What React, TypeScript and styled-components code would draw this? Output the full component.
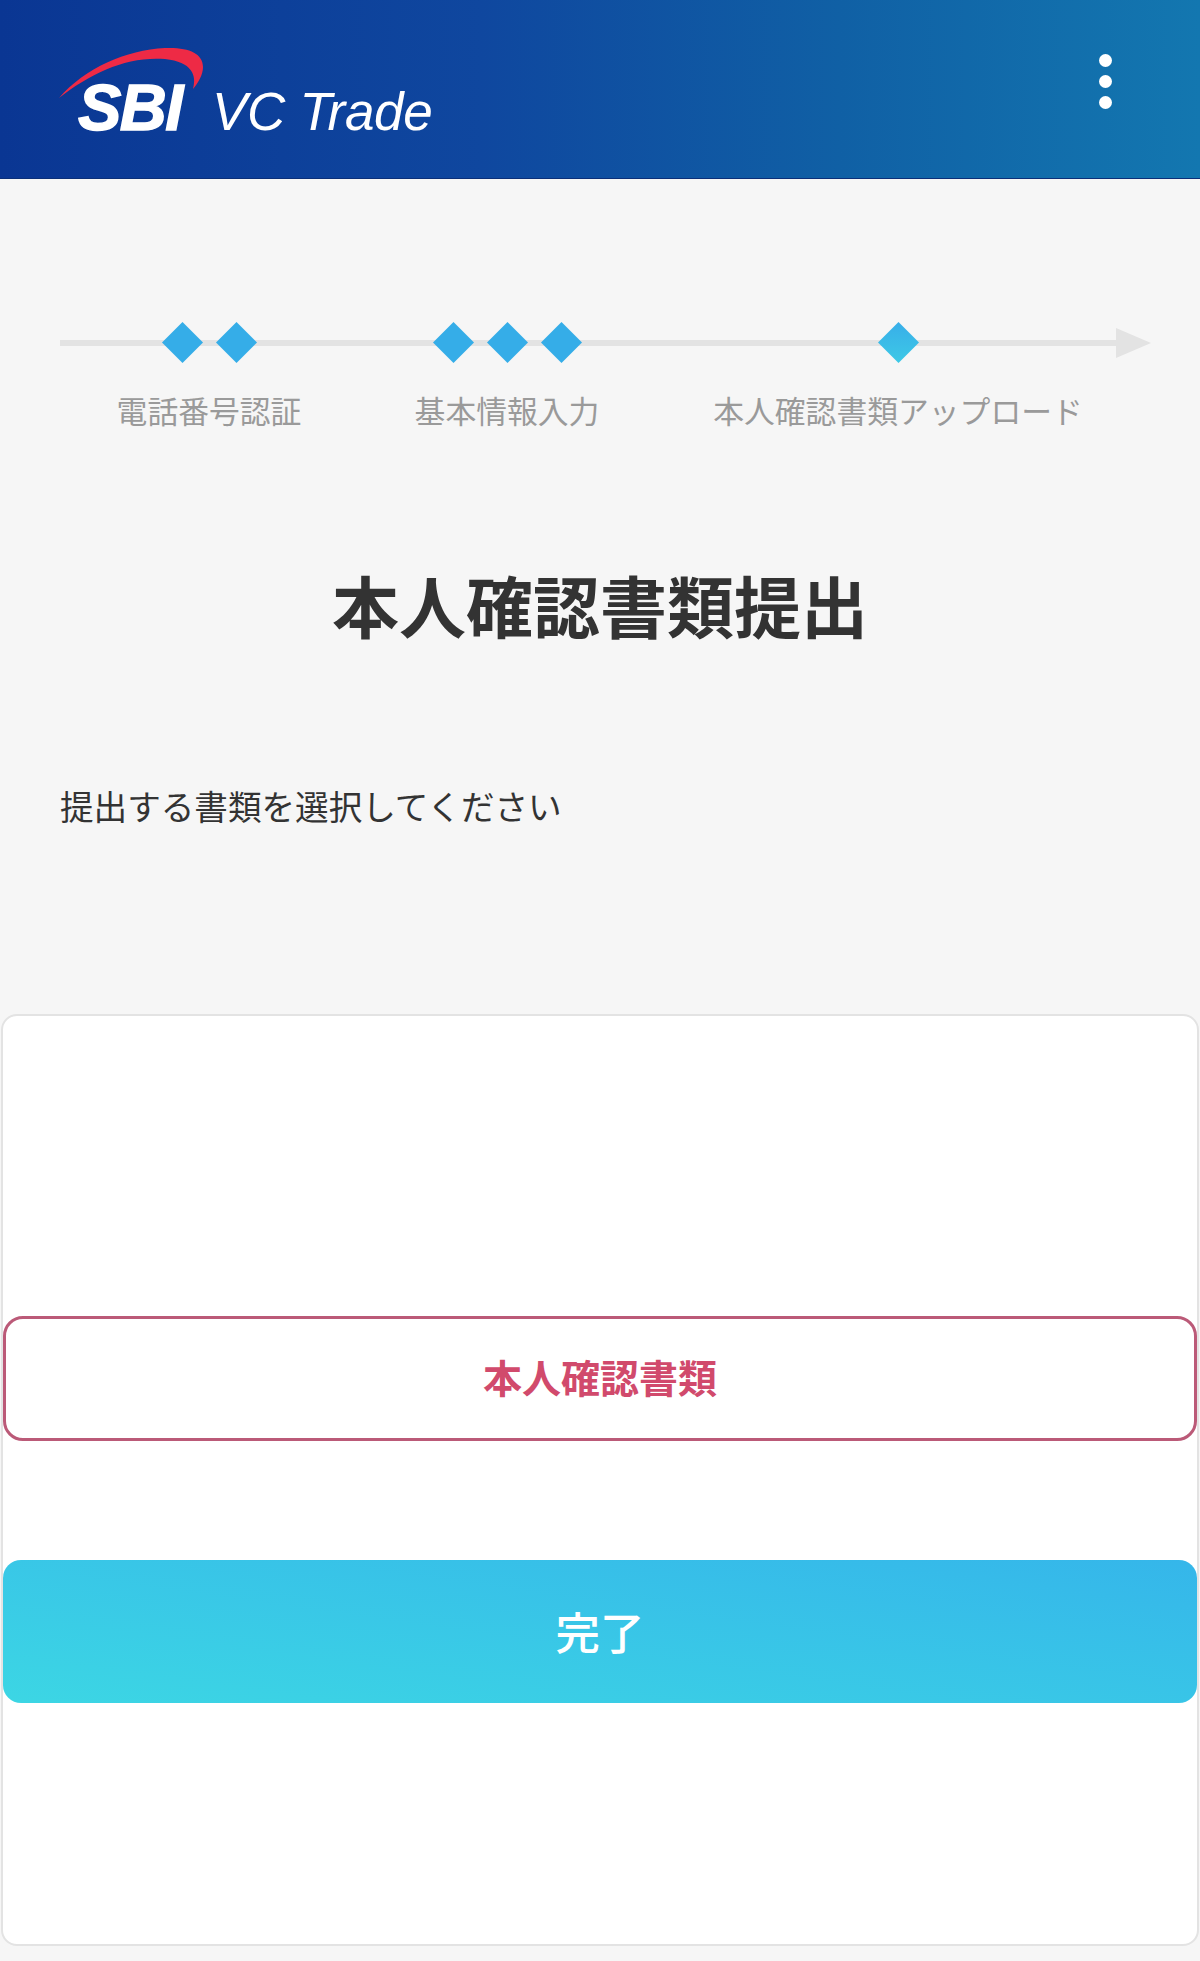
import React from "react";
import styled, { createGlobalStyle } from "styled-components";

const Global = createGlobalStyle`
  html, body { margin: 0; padding: 0; background: #f6f6f6; }
  body { font-family: "Noto Sans CJK JP", "Noto Sans", sans-serif; }
`;

const Page = styled.div`
  width: 1200px;
  height: 1961px;
  display: flex;
  flex-direction: column;
  overflow: hidden;
  background: #f6f6f6;
`;

const Header = styled.header`
  height: 178px;
  flex: none;
  display: flex;
  align-items: flex-start;
  justify-content: space-between;
  padding: 0 88px 0 55px;
  background: linear-gradient(90deg, #0a3693 0%, #0f479f 40%, #1060a5 70%, #1377b0 100%);
  border-bottom: 1px solid #0b2f78;
`;

const Logo = styled.svg`
  width: 400px;
  height: 178px;
  display: block;
`;

const MenuDots = styled.div`
  display: flex;
  flex-direction: column;
  gap: 8px;
  padding-top: 54px;
`;

const Dot = styled.span`
  width: 13px;
  height: 13px;
  border-radius: 50%;
  background: #fff;
`;

const Stepper = styled.div`
  position: relative;
  display: grid;
  grid-template-columns: 298px 298px 484px;
  margin: 143px 60px 0;
  &::before {
    content: "";
    position: absolute;
    left: 0;
    right: 22px;
    top: 18px;
    height: 6px;
    background: #e3e3e3;
  }
  &::after {
    content: "";
    position: absolute;
    left: 1056px;
    top: 6px;
    border-left: 35px solid #e3e3e3;
    border-top: 15px solid transparent;
    border-bottom: 15px solid transparent;
  }
`;

const Step = styled.div`
  position: relative;
  z-index: 1;
  display: flex;
  flex-direction: column;
  align-items: center;
`;

const Diamonds = styled.div`
  height: 41px;
  display: flex;
  align-items: center;
  gap: 25px;
`;

const Diamond = styled.span<{ $current?: boolean }>`
  width: 29px;
  height: 29px;
  transform: rotate(45deg);
  background: ${(p) =>
    p.$current ? "linear-gradient(135deg, #38aee9, #3dc9e6)" : "#35ade8"};
`;

const StepLabel = styled.div`
  margin-top: 25px;
  font-size: 30.8px;
  line-height: 44px;
  color: #9a9a9a;
  white-space: nowrap;
`;

const Title = styled.h1`
  margin: 127px 0 0;
  text-align: center;
  font-size: 67px;
  line-height: 90px;
  font-weight: 700;
  color: #333;
`;

const Lead = styled.p`
  margin: 133px 0 0 60px;
  font-size: 33.6px;
  line-height: 48px;
  color: #333;
`;

const Card = styled.section`
  margin: 184px 1px 0;
  height: 932px;
  box-sizing: border-box;
  background: #fff;
  border: 2px solid #e3e3e3;
  border-radius: 16px;
  display: flex;
  flex-direction: column;
  padding-top: 300px;
  gap: 119px;
`;

const OutlineButton = styled.button`
  height: 125px;
  flex: none;
  box-sizing: border-box;
  background: #fff;
  border: 3px solid #bb5a78;
  border-radius: 20px;
  font-family: inherit;
  font-size: 39px;
  font-weight: 700;
  color: #d14a6c;
  padding: 0 0 6px;
`;

const PrimaryButton = styled.button`
  height: 143px;
  flex: none;
  border: 0;
  border-radius: 18px;
  background: linear-gradient(8deg, #3cd6e4 0%, #35b6ea 100%);
  font-family: inherit;
  font-size: 44.5px;
  font-weight: 500;
  color: #fff;
  padding: 0 0 3px;
`;

export default function App() {
  return (
    <Page>
      <Global />
      <Header>
        <Logo viewBox="55 0 400 178" aria-label="SBI VC Trade">
          <path
            d="M59 98 C85 68 126 50 165 48 C188 47 203 53 203 67 C203 75 198 83 193 89 C197 75 192 62 165 59 C128 56 92 72 59 98 Z"
            fill="#ee2a45"
          />
          <text
            x="78"
            y="130"
            fontFamily="'Liberation Sans', sans-serif"
            fontStyle="italic"
            fontWeight="700"
            fontSize="65"
            letterSpacing="-1.5"
            fill="#fff"
            stroke="#fff"
            strokeWidth="1.5"
          >
            SBI
          </text>
          <text
            x="212"
            y="130"
            fontFamily="'Liberation Sans', sans-serif"
            fontStyle="italic"
            fontSize="53"
            letterSpacing="-0.3"
            fill="#fff"
          >
            VC Trade
          </text>
        </Logo>
        <MenuDots>
          <Dot />
          <Dot />
          <Dot />
        </MenuDots>
      </Header>
      <Stepper>
        <Step>
          <Diamonds>
            <Diamond />
            <Diamond />
          </Diamonds>
          <StepLabel>電話番号認証</StepLabel>
        </Step>
        <Step>
          <Diamonds>
            <Diamond />
            <Diamond />
            <Diamond />
          </Diamonds>
          <StepLabel>基本情報入力</StepLabel>
        </Step>
        <Step>
          <Diamonds>
            <Diamond $current />
          </Diamonds>
          <StepLabel>本人確認書類アップロード</StepLabel>
        </Step>
      </Stepper>
      <Title>本人確認書類提出</Title>
      <Lead>提出する書類を選択してください</Lead>
      <Card>
        <OutlineButton>本人確認書類</OutlineButton>
        <PrimaryButton>完了</PrimaryButton>
      </Card>
    </Page>
  );
}
